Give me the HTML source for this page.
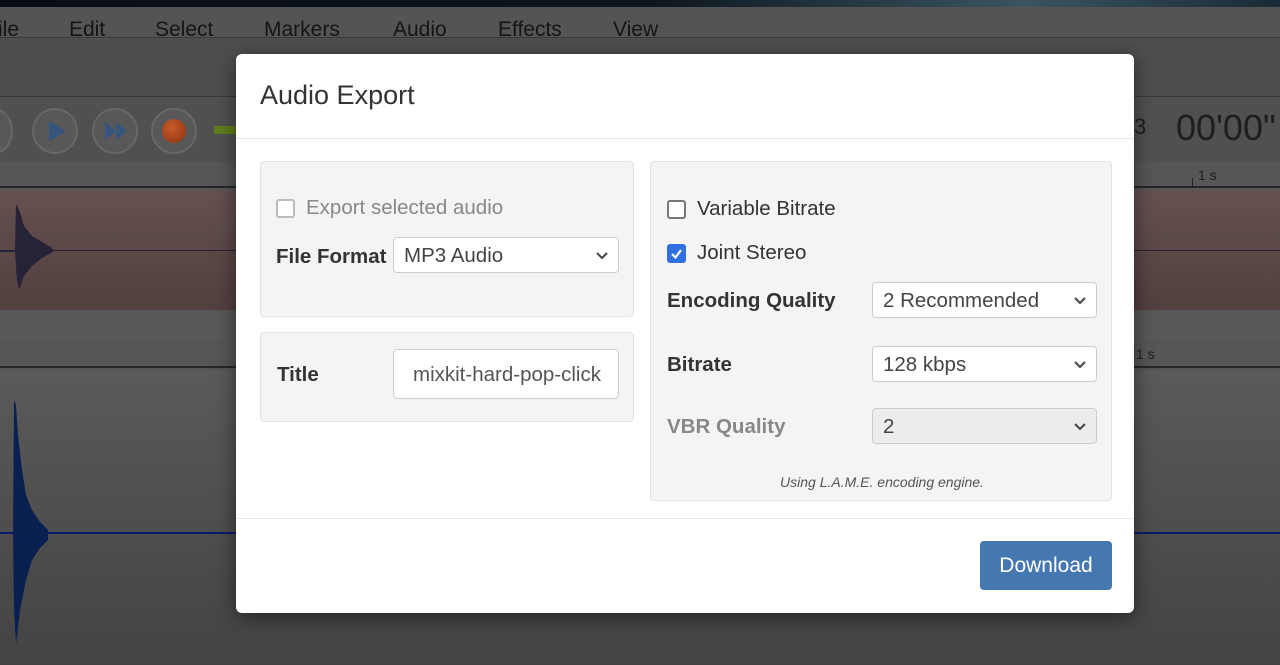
<!DOCTYPE html>
<html><head><meta charset="utf-8"><style>
*{box-sizing:border-box;margin:0;padding:0}
body{width:1280px;height:665px;overflow:hidden;position:relative;font-family:"Liberation Sans",Arial,sans-serif;background:#565656}
.abs{position:absolute}
.menu span{position:absolute;top:11px;font-size:21px;color:#151515}
.modal{position:absolute;left:236px;top:54px;width:898px;height:559px;background:#fff;border-radius:6px;box-shadow:0 4px 20px rgba(0,0,0,.5)}
.panel{position:absolute;background:#f4f4f4;border:1px solid #e3e3e3;border-radius:4px}
.cb{position:absolute;width:19px;height:19px;border:2px solid #8a8a8a;border-radius:3px;background:#fff}
.lbl{position:absolute;font-size:20.5px;color:#333}
.b{font-weight:bold}
.sel{position:absolute;height:36px;background:#fff;border:1px solid #ccc;border-radius:4px;font-size:20.5px;color:#444;padding:6px 10px}
.sel svg{position:absolute;right:9px;top:13px}
</style></head><body>
<div class="abs" style="left:0;top:0;width:1280px;height:7px;background:linear-gradient(90deg,#0a0e14,#0c141c 50%,#3a5560 80%,#1a2a36)"></div>
<div class="abs menu" style="left:0;top:7px;width:1280px;height:31px;background:#545454;border-bottom:1px solid #3a3a3a">
<span style="left:-2px">ile</span><span style="left:69px">Edit</span><span style="left:155px">Select</span><span style="left:264px">Markers</span><span style="left:393px">Audio</span><span style="left:498px">Effects</span><span style="left:613px">View</span></div>
<div class="abs" style="left:0;top:38px;width:1280px;height:59px;background:#4e4e4e;border-bottom:1px solid #383838"></div>
<div class="abs" style="left:0;top:97px;width:1280px;height:64px;background:#505050"></div>
<div class="abs" style="left:-25px;top:108px;width:38px;height:46px;border-radius:50%;border:2px solid #676767;background:#585858"></div>
<div class="abs" style="left:32px;top:108px;width:46px;height:46px;border-radius:50%;border:2px solid #676767;background:#585858"></div>
<svg class="abs" style="left:46px;top:119px" width="22" height="24"><path d="M3 2 L20 12 L3 22Z" fill="#35557f"/></svg>
<div class="abs" style="left:92px;top:108px;width:46px;height:46px;border-radius:50%;border:2px solid #676767;background:#585858"></div>
<svg class="abs" style="left:103px;top:121px" width="26" height="20"><path d="M2 1 L13 10 L2 19Z M13 1 L24 10 L13 19Z" fill="#35557f"/></svg>
<div class="abs" style="left:151px;top:108px;width:46px;height:46px;border-radius:50%;border:2px solid #676767;background:#585858"></div>
<div class="abs" style="left:162px;top:119px;width:24px;height:24px;border-radius:50%;background:radial-gradient(circle at 40% 35%,#c85a28,#8a3210)"></div>
<div class="abs" style="left:214px;top:126px;width:30px;height:8px;background:#5f7d1c"></div>
<div class="abs" style="left:1176px;top:107px;font-size:36px;color:#1e1e1e">00'00"</div>
<div class="abs" style="left:1134px;top:114px;font-size:22px;color:#1e1e1e">3</div>
<div class="abs" style="left:0;top:161px;width:1280px;height:27px;background:#565656;border-bottom:2px solid #262626"></div>
<div class="abs" style="left:1198px;top:167px;font-size:14px;color:#1e1e1e">1 s</div>
<div class="abs" style="left:1192px;top:178px;width:1px;height:8px;background:#222"></div>
<div class="abs" style="left:0;top:190px;width:1280px;height:120px;background:linear-gradient(#665050,#523f3e)"></div>
<div class="abs" style="left:0;top:250px;width:1280px;height:1px;background:#262236"></div>
<svg class="abs" style="left:0;top:190px" width="60" height="120"><path d="M0 60 L15 60 L16 14 L20 22 L24 36 L32 46 L42 52 L52 58 L53 62 L42 68 L32 76 L24 86 L19 100 L17 90 L15 62 L0 62Z" fill="#262238"/></svg>
<div class="abs" style="left:0;top:310px;width:1280px;height:31px;background:#585858"></div>
<div class="abs" style="left:0;top:341px;width:1280px;height:27px;background:#565656;border-bottom:2px solid #262626"></div>
<div class="abs" style="left:1136px;top:346px;font-size:14px;color:#1e1e1e">1 s</div>
<div class="abs" style="left:0;top:370px;width:1280px;height:295px;background:linear-gradient(#5a5a5a,#434343)"></div>
<div class="abs" style="left:0;top:532px;width:1280px;height:2px;background:#0a1a66"></div>
<svg class="abs" style="left:0;top:370px" width="60" height="295"><path d="M13 162 L14 30 L16 35 L18 65 L22 100 L26 125 L32 140 L40 152 L48 160 L48 170 L40 178 L32 190 L26 210 L20 240 L16 275 L14 240Z" fill="#0a2050"/></svg>
<div class="modal">
<div class="abs" style="left:24px;top:26px;font-size:27px;color:#333">Audio Export</div>
<div class="abs" style="left:0;top:84px;width:898px;height:1px;background:#e5e5e5"></div>
<div class="panel" style="left:24px;top:107px;width:374px;height:156px">
<div class="cb" style="left:15px;top:37px;border-color:#bbb"></div>
<div class="lbl" style="left:45px;top:34px;color:#888">Export selected audio</div>
<div class="lbl b" style="left:15px;top:83px">File Format</div>
<div class="sel" style="left:132px;top:75px;width:226px">MP3 Audio<svg width="14" height="10"><path d="M2 2 L7 7 L12 2" fill="none" stroke="#444" stroke-width="2"/></svg></div>
</div>
<div class="panel" style="left:24px;top:278px;width:374px;height:90px">
<div class="lbl b" style="left:16px;top:30px">Title</div>
<div class="sel" style="left:132px;top:16px;width:226px;height:50px;padding:0;overflow:hidden;color:#555"><div style="position:absolute;left:19px;top:13px;width:188px;overflow:hidden;white-space:nowrap">mixkit-hard-pop-click</div></div>
</div>
<div class="panel" style="left:414px;top:107px;width:462px;height:340px">
<div class="cb" style="left:16px;top:38px;border-color:#777"></div>
<div class="lbl" style="left:46px;top:35px">Variable Bitrate</div>
<div class="cb" style="left:16px;top:82px;background:#2f6fe0;border-color:#2f6fe0"><svg width="15" height="15" style="position:absolute;left:0;top:0"><path d="M3 8 L6.5 11.5 L12 4" fill="none" stroke="#fff" stroke-width="2.2"/></svg></div>
<div class="lbl" style="left:46px;top:79px">Joint Stereo</div>
<div class="lbl b" style="left:16px;top:127px">Encoding Quality</div>
<div class="sel" style="left:221px;top:120px;width:225px">2 Recommended<svg width="14" height="10"><path d="M2 2 L7 7 L12 2" fill="none" stroke="#444" stroke-width="2"/></svg></div>
<div class="lbl b" style="left:16px;top:191px">Bitrate</div>
<div class="sel" style="left:221px;top:184px;width:225px">128 kbps<svg width="14" height="10"><path d="M2 2 L7 7 L12 2" fill="none" stroke="#444" stroke-width="2"/></svg></div>
<div class="lbl b" style="left:16px;top:253px;color:#888">VBR Quality</div>
<div class="sel" style="left:221px;top:246px;width:225px;background:#ececec">2<svg width="14" height="10"><path d="M2 2 L7 7 L12 2" fill="none" stroke="#444" stroke-width="2"/></svg></div>
<div class="abs" style="left:0;width:462px;top:312px;text-align:center;font-size:14px;font-style:italic;color:#555">Using L.A.M.E. encoding engine.</div>
</div>
<div class="abs" style="left:0;top:464px;width:898px;height:1px;background:#e5e5e5"></div>
<div class="abs" style="left:744px;top:487px;width:132px;height:49px;background:#4577b1;border-radius:4px;color:#fff;font-size:21px;text-align:center;line-height:49px">Download</div>
</div>
</body></html>
